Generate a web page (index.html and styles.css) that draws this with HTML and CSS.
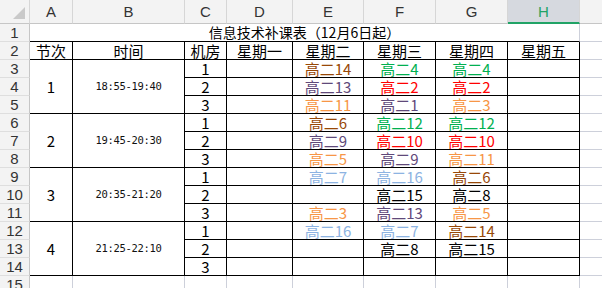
FILE: index.html
```html
<!DOCTYPE html>
<html lang="zh-CN">
<head>
<meta charset="utf-8">
<title>信息技术补课表</title>
<link rel="stylesheet" href="styles.css">
</head>
<body>
<div class="sheet">
  <div class="corner"><svg class="tri" width="12" height="12" viewBox="0 0 12 12"><polygon points="12,0 12,12 0,12" fill="#c9c9c9"/></svg></div>
  <div class="ch">A</div><div class="ch">B</div><div class="ch">C</div><div class="ch">D</div><div class="ch">E</div><div class="ch">F</div><div class="ch">G</div><div class="ch sel">H</div><div class="ch end"></div>

  <div class="rh">1</div><div class="title">信息技术补课表（12月6日起）</div><div class="x"></div>

  <div class="rh">2</div><div class="t">节次</div><div class="t">时间</div><div class="t">机房</div><div class="t">星期一</div><div class="t">星期二</div><div class="t">星期三</div><div class="t">星期四</div><div class="t">星期五</div><div class="x"></div>

  <div class="rh">3</div><div class="t m3">1</div><div class="t m3 time">18:55-19:40</div><div class="t">1</div><div class="t"></div><div class="t br">高二14</div><div class="t gr">高二4</div><div class="t gr">高二4</div><div class="t"></div><div class="x"></div>
  <div class="rh">4</div><div class="t">2</div><div class="t"></div><div class="t pu">高二13</div><div class="t rd">高二2</div><div class="t rd">高二2</div><div class="t"></div><div class="x"></div>
  <div class="rh">5</div><div class="t">3</div><div class="t"></div><div class="t or">高二11</div><div class="t pu">高二1</div><div class="t or">高二3</div><div class="t"></div><div class="x"></div>

  <div class="rh">6</div><div class="t m3">2</div><div class="t m3 time">19:45-20:30</div><div class="t">1</div><div class="t"></div><div class="t br">高二6</div><div class="t gr">高二12</div><div class="t gr">高二12</div><div class="t"></div><div class="x"></div>
  <div class="rh">7</div><div class="t">2</div><div class="t"></div><div class="t pu">高二9</div><div class="t rd">高二10</div><div class="t rd">高二10</div><div class="t"></div><div class="x"></div>
  <div class="rh">8</div><div class="t">3</div><div class="t"></div><div class="t or">高二5</div><div class="t pu">高二9</div><div class="t or">高二11</div><div class="t"></div><div class="x"></div>

  <div class="rh">9</div><div class="t m3">3</div><div class="t m3 time">20:35-21:20</div><div class="t">1</div><div class="t"></div><div class="t lb">高二7</div><div class="t lb">高二16</div><div class="t br">高二6</div><div class="t"></div><div class="x"></div>
  <div class="rh">10</div><div class="t">2</div><div class="t"></div><div class="t"></div><div class="t">高二15</div><div class="t">高二8</div><div class="t"></div><div class="x"></div>
  <div class="rh">11</div><div class="t">3</div><div class="t"></div><div class="t or">高二3</div><div class="t pu">高二13</div><div class="t or">高二5</div><div class="t"></div><div class="x"></div>

  <div class="rh">12</div><div class="t m3">4</div><div class="t m3 time">21:25-22:10</div><div class="t">1</div><div class="t"></div><div class="t lb">高二16</div><div class="t lb">高二7</div><div class="t br">高二14</div><div class="t"></div><div class="x"></div>
  <div class="rh">13</div><div class="t">2</div><div class="t"></div><div class="t"></div><div class="t">高二8</div><div class="t">高二15</div><div class="t"></div><div class="x"></div>
  <div class="rh">14</div><div class="t">3</div><div class="t"></div><div class="t"></div><div class="t"></div><div class="t"></div><div class="t"></div><div class="x"></div>

  <div class="rh">15</div><div class="g"></div><div class="g"></div><div class="g"></div><div class="g"></div><div class="g"></div><div class="g"></div><div class="g"></div><div class="g"></div><div class="x"></div>
</div>
</body>
</html>
```

FILE: styles.css
```css
* { box-sizing: border-box; margin: 0; padding: 0; }
html, body { background: #fff; }
body {
  width: 602px;
  height: 288px;
  overflow: hidden;
  font-family: "Noto Sans CJK SC", sans-serif;
  color: #000;
}
.sheet {
  display: grid;
  grid-template-columns: 30px 43px 112px 42px 66px 71px 72px 72px 72px 1fr;
  grid-template-rows: 24px repeat(15, 18px);
}
.sheet > div {
  display: flex;
  align-items: center;
  justify-content: center;
  white-space: nowrap;
  line-height: 17px;
}
.corner {
  position: relative;
  background: #f3f3f3;
  border-right: 1px solid #d6d6d6;
  border-bottom: 1px solid #c6c6c6;
}
.tri { position: absolute; right: 4px; bottom: 4px; }
.ch {
  background: #f3f3f3;
  border-right: 1px solid #d6d6d6;
  border-bottom: 1px solid #c6c6c6;
  font-family: "Liberation Sans", sans-serif;
  font-size: 15px;
  color: #333;
}
.ch.sel {
  background: #d6d9df;
  color: #21a366;
  border-bottom: 2px solid #21a366;
}
.ch.end { border-right: none; }
.rh {
  background: #f3f3f3;
  border-right: 1px solid #c6c6c6;
  border-bottom: 1px solid #dedede;
  font-family: "Liberation Sans", sans-serif;
  font-size: 15px;
  color: #333;
}
.g { border-right: 1px solid #cdd0da; border-bottom: 1px solid #cdd0da; }
.x { border-bottom: 1px solid #cdd0da; }
.title {
  grid-column: span 8;
  border-right: 1px solid #cdd0da;
  border-bottom: 1px solid #000;
  font-size: 14px;
}
.t {
  border-right: 1px solid #000;
  border-bottom: 1px solid #000;
  font-size: 15px;
}
.m3 { grid-row: span 3; }
.sheet > .time {
  font-family: "DejaVu Sans Mono", monospace;
  font-size: 10.5px;
  letter-spacing: -0.3px;
  color: #111;
}
.br { color: #984807; }
.pu { color: #5f497a; }
.or { color: #f79646; }
.gr { color: #00b050; }
.rd { color: #ff0000; }
.lb { color: #8db3e2; }
```
